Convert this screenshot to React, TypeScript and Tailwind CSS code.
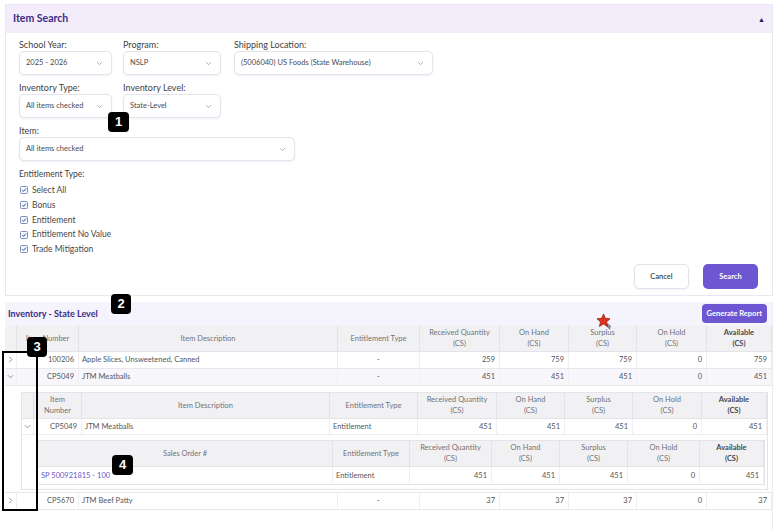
import { ChevronDown, ChevronRight } from "lucide-react";
import type { ReactNode } from "react";

const MAIN = "grid grid-cols-[12px_62px_259px_82px_80px_69px_68px_70px_1fr]";
const NEST = "grid grid-cols-[12px_48px_248px_88px_79px_68px_68px_69px_1fr]";
const SUB = "grid grid-cols-[295px_77px_82px_68px_68px_72px_1fr]";

const alignCls = {
  left: "justify-start pl-[3px]",
  right: "justify-end pr-[4px]",
  center: "justify-center",
};

function Th({ children, bold = false }: { children?: ReactNode; bold?: boolean }) {
  return (
    <div
      className={`flex items-center justify-center border-r border-[#e1e1e6] px-[2px] text-center leading-[11px] ${
        bold ? "font-bold text-[#48484d]" : "text-[#727277]"
      }`}
    >
      {children}
    </div>
  );
}

function Td({ children, align = "left" }: { children?: ReactNode; align?: "left" | "right" | "center" }) {
  return (
    <div className={`flex items-center whitespace-nowrap border-r border-[#efeff2] ${alignCls[align]}`}>
      {children}
    </div>
  );
}

function Select({ value, className = "" }: { value: string; className?: string }) {
  return (
    <div
      className={`flex h-[24px] items-center justify-between rounded-[5px] border border-[#e6e3ec] bg-white pl-[6px] pr-[7px] text-[7.5px] text-[#4a4a4f] shadow-[0_1px_2px_rgba(60,40,120,0.08)] ${className}`}
    >
      <span>{value}</span>
      <ChevronDown size={9} strokeWidth={1.5} color="#77777c" />
    </div>
  );
}

function Check({ label }: { label: string }) {
  return (
    <div className="flex h-[14.75px] items-center gap-[4px] pl-[1px]">
      <span className="flex h-[8px] w-[8px] items-center justify-center rounded-[1.5px] border border-[#7d8fb6] bg-[#f4f7fd]">
        <svg width="6" height="6" viewBox="0 0 10 10">
          <path d="M2 5.2 L4.2 7.4 L8.2 2.6" fill="none" stroke="#2f4f8f" strokeWidth="1.6" />
        </svg>
      </span>
      <span className="text-[8.5px] text-[#47474c]">{label}</span>
    </div>
  );
}

function Badge({ n, className }: { n: string; className: string }) {
  return (
    <div
      className={`absolute flex items-center justify-center rounded-[4px] bg-black font-['Liberation_Sans',sans-serif] text-[13px] font-bold text-white ${className}`}
    >
      {n}
    </div>
  );
}

function Caret({ open }: { open: boolean }) {
  return (
    <svg width="7" height="7" viewBox="0 0 8 8" className="shrink-0">
      <path
        d={open ? "M1 2.5 L4 5.5 L7 2.5" : "M2.5 1 L5.5 4 L2.5 7"}
        fill="none"
        stroke="#85858b"
        strokeWidth="1"
      />
    </svg>
  );
}

const rows = [
  { num: "100206", desc: "Apple Slices, Unsweetened, Canned", rq: 259, oh: 759, su: 759, hold: 0, av: 759, open: false },
  { num: "CP5049", desc: "JTM Meatballs", rq: 451, oh: 451, su: 451, hold: 0, av: 451, open: true },
  { num: "CP5670", desc: "JTM Beef Patty", rq: 37, oh: 37, su: 37, hold: 0, av: 37, open: false },
];

function NumCells({ r }: { r: { rq: number; oh: number; su: number; hold: number; av: number } }) {
  return (
    <>
      <Td align="right">{r.rq}</Td>
      <Td align="right">{r.oh}</Td>
      <Td align="right">{r.su}</Td>
      <Td align="right">{r.hold}</Td>
      <Td align="right">{r.av}</Td>
    </>
  );
}

function Detail() {
  return (
    <div className="border-b border-[#e8e8ec] bg-white pb-[2px] pl-[16px] pr-[4px] pt-[6px]">
      <div className="border border-[#e3e3e8]">
        <div className={`${NEST} h-[26px] border-b border-[#e3e3e8] bg-[#f1f1f4]`}>
          <Th />
          <Th>
            Item
            <br />
            Number
          </Th>
          <Th>Item Description</Th>
          <Th>Entitlement Type</Th>
          <Th>
            Received Quantity
            <br />
            (CS)
          </Th>
          <Th>
            On Hand
            <br />
            (CS)
          </Th>
          <Th>
            Surplus
            <br />
            (CS)
          </Th>
          <Th>
            On Hold
            <br />
            (CS)
          </Th>
          <Th bold>
            Available
            <br />
            (CS)
          </Th>
        </div>
        <div className={`${NEST} h-[16px] border-b border-[#ececf0] text-[#555559]`}>
          <Td align="center">
            <Caret open />
          </Td>
          <Td align="right">CP5049</Td>
          <Td>JTM Meatballs</Td>
          <Td>Entitlement</Td>
          <NumCells r={rows[1]} />
        </div>
        <div className="pb-[4px] pl-[15px] pr-[2px] pt-[5px]">
          <div className="border border-[#e3e3e8]">
            <div className={`${SUB} h-[26px] border-b border-[#e3e3e8] bg-[#f1f1f4]`}>
              <Th>Sales Order #</Th>
              <Th>Entitlement Type</Th>
              <Th>
                Received Quantity
                <br />
                (CS)
              </Th>
              <Th>
                On Hand
                <br />
                (CS)
              </Th>
              <Th>
                Surplus
                <br />
                (CS)
              </Th>
              <Th>
                On Hold
                <br />
                (CS)
              </Th>
              <Th bold>
                Available
                <br />
                (CS)
              </Th>
            </div>
            <div className={`${SUB} h-[17px] text-[#555559]`}>
              <Td>
                <span className="text-[#6a58c9]">SP 500921815 - 100</span>
              </Td>
              <Td>Entitlement</Td>
              <NumCells r={rows[1]} />
            </div>
          </div>
        </div>
      </div>
    </div>
  );
}

export default function App() {
  return (
    <div className="relative h-[530px] w-[779px] overflow-hidden bg-white font-['Lato','Open_Sans',sans-serif]">
      {/* Item Search card */}
      <div className="ml-[5px] mr-[6px] mt-[4px] border border-[#ebe7f2] bg-white">
        <div className="flex h-[28px] items-center justify-between bg-[#f2ecfb] pl-[7px] pr-[7px]">
          <span className="text-[10.5px] font-bold text-[#3b2c85]">Item Search</span>
          <span className="text-[7px] text-[#241a5c]">▲</span>
        </div>
        <div className="pb-[6px] pl-[13px] pr-[13px] pt-[6px]">
          <div className="flex">
            <div className="w-[93px]">
              <div className="text-[9px] leading-[12px] text-[#3f3f44]">School Year:</div>
              <Select value="2025 - 2026" />
            </div>
            <div className="ml-[11px] w-[98px]">
              <div className="text-[9px] leading-[12px] text-[#3f3f44]">Program:</div>
              <Select value="NSLP" />
            </div>
            <div className="ml-[13px] w-[199px]">
              <div className="text-[9px] leading-[12px] text-[#3f3f44]">Shipping Location:</div>
              <Select value="(5006040) US Foods (State Warehouse)" />
            </div>
          </div>
          <div className="mt-[7px] flex">
            <div className="w-[93px]">
              <div className="text-[9px] leading-[12px] text-[#3f3f44]">Inventory Type:</div>
              <Select value="All items checked" />
            </div>
            <div className="ml-[11px] w-[98px]">
              <div className="text-[9px] leading-[12px] text-[#3f3f44]">Inventory Level:</div>
              <Select value="State-Level" />
            </div>
          </div>
          <div className="mt-[7px] w-[276px]">
            <div className="text-[9px] leading-[12px] text-[#3f3f44]">Item:</div>
            <Select value="All items checked" />
          </div>
          <div className="mt-[7px] text-[8.5px] leading-[12px] text-[#3f3f44]">Entitlement Type:</div>
          <div className="mt-[3px] flex flex-col">
            <Check label="Select All" />
            <Check label="Bonus" />
            <Check label="Entitlement" />
            <Check label="Entitlement No Value" />
            <Check label="Trade Mitigation" />
          </div>
          <div className="mt-[7px] flex justify-end gap-[14px] pr-[1px]">
            <button className="h-[25px] w-[55px] rounded-[5px] border border-[#e4e2ea] bg-white text-[7.5px] font-semibold text-[#444448] shadow-[0_1px_2px_rgba(0,0,0,0.05)]">
              Cancel
            </button>
            <button className="h-[25px] w-[55px] rounded-[5px] bg-[#6e56d2] text-[7.5px] font-bold text-white">
              Search
            </button>
          </div>
        </div>
      </div>

      {/* Inventory section */}
      <div className="ml-[5px] mr-[6px] mt-[6px] h-[240px] border-r border-[#ececf0]">
        <div className="flex h-[24px] items-center justify-between bg-[#f5f3fb] pl-[3px] pr-[5px]">
          <span className="text-[9px] font-bold text-[#3b2c85]">Inventory - State Level</span>
          <button className="h-[19px] rounded-[4px] bg-[#6e56d2] px-[5px] text-[7.5px] font-bold text-white">
            Generate Report
          </button>
        </div>
        <div className="text-[7.5px]">
          <div className={`${MAIN} h-[26px] border-b border-[#e3e3e8] bg-[#f1f1f4]`}>
            <Th />
            <Th>Item Number</Th>
            <Th>Item Description</Th>
            <Th>Entitlement Type</Th>
            <Th>
              Received Quantity
              <br />
              (CS)
            </Th>
            <Th>
              On Hand
              <br />
              (CS)
            </Th>
            <Th>
              Surplus
              <br />
              (CS)
            </Th>
            <Th>
              On Hold
              <br />
              (CS)
            </Th>
            <Th bold>
              Available
              <br />
              (CS)
            </Th>
          </div>
          {rows.map((r) => (
            <div key={r.num}>
              <div
                className={`${MAIN} h-[17px] border-b border-[#e8e8ec] text-[#555559] ${
                  r.open ? "bg-[#f7f6fa]" : "bg-white"
                }`}
              >
                <Td align="center">
                  <Caret open={r.open} />
                </Td>
                <Td align="right">{r.num}</Td>
                <Td>{r.desc}</Td>
                <Td align="center">-</Td>
                <NumCells r={r} />
              </div>
              {r.open && <Detail />}
            </div>
          ))}
        </div>
      </div>

      {/* annotations */}
      <Badge n="1" className="left-[108px] top-[112px] h-[20px] w-[21px]" />
      <Badge n="2" className="left-[111px] top-[294px] h-[20px] w-[20px]" />
      <div className="absolute left-[2px] top-[351px] h-[160px] w-[36px] border-2 border-black" />
      <Badge n="3" className="left-[27px] top-[337px] h-[20px] w-[20px]" />
      <Badge n="4" className="left-[112px] top-[455px] h-[20px] w-[21px]" />
      <svg className="absolute left-[595px] top-[312px]" width="20" height="20" viewBox="0 0 20 20">
        <path d="M11 10 L16 14 L15 18 L10 13 Z" fill="#8a8a8f" />
        <path
          d="M8.5 2 L10.4 6.3 L15 6.8 L11.5 9.9 L12.6 14.4 L8.5 12 L4.4 14.4 L5.5 9.9 L2 6.8 L6.6 6.3 Z"
          fill="#d8341e"
          stroke="#a3220f"
          strokeWidth="0.8"
        />
      </svg>
    </div>
  );
}
